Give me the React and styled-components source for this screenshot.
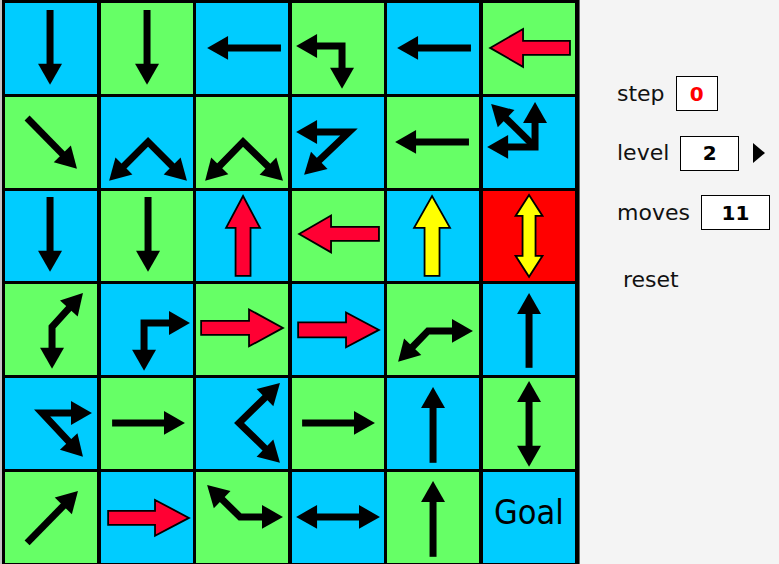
import React from 'react'
import styled, { createGlobalStyle } from 'styled-components'

const GlobalStyle = createGlobalStyle`
  html, body {
    margin: 0;
    padding: 0;
    background: #f4f4f4;
    overflow: hidden;
  }
`

const COLORS = {
  blue: '#00ccff',
  green: '#66ff66',
  red: '#ff0000',
}

const Page = styled.div`
  display: flex;
  align-items: flex-start;
  width: 779px;
  height: 564px;
  overflow: hidden;
`

const Board = styled.div`
  box-sizing: border-box;
  width: 580px;
  display: grid;
  grid-template-columns: repeat(6, 1fr);
  grid-auto-rows: 90.8px;
  gap: 3px 3.5px;
  padding: 3px 4px 3px 3px;
  background: #000;
  border-left: 2px solid #c4c4c4;
  border-right: 1px solid #666;
  flex-shrink: 0;
`

const Cell = styled.div`
  position: relative;
  background: ${(p) => COLORS[p.$bg]};
  display: flex;
  align-items: center;
  justify-content: center;
  svg {
    position: absolute;
    inset: 0;
    width: 100%;
    height: 100%;
  }
`

const Goal = styled.span`
  font-family: 'DejaVu Sans Condensed', 'DejaVu Sans', sans-serif;
  font-size: 34px;
  color: #000;
  padding-bottom: 10px;
`

const Side = styled.div`
  display: flex;
  flex-direction: column;
  gap: 24.5px;
  padding: 76px 0 0 37px;
  font-family: 'DejaVu Sans', sans-serif;
  font-size: 22px;
  color: #111;
`

const Row = styled.div`
  display: flex;
  align-items: center;
  gap: 11px;
  height: 35px;
`

const Label = styled.span`
  line-height: 1;
`

const ValueBox = styled.div`
  box-sizing: border-box;
  width: ${(p) => p.$w}px;
  height: 35px;
  border: 1px solid #000;
  background: #fff;
  display: flex;
  align-items: center;
  justify-content: center;
  font-weight: bold;
  font-size: 20px;
  color: ${(p) => (p.$red ? '#ff0000' : '#000')};
`

const NextLevel = styled.span`
  width: 0;
  height: 0;
  margin-left: 3px;
  border-left: 12px solid #000;
  border-top: 10px solid transparent;
  border-bottom: 10px solid transparent;
`

const ResetButton = styled.span`
  margin: 14px 0 0 6px;
  cursor: pointer;
`

// black line arrows: stroke shaft with filled triangular heads
const HEAD_LEN = 21
const HEAD_HALF = 12
const SHAFT = 7

const headAt = (tip, from) => {
  const dx = tip[0] - from[0]
  const dy = tip[1] - from[1]
  const d = Math.hypot(dx, dy)
  const ux = dx / d
  const uy = dy / d
  const bx = tip[0] - ux * HEAD_LEN
  const by = tip[1] - uy * HEAD_LEN
  const px = -uy * HEAD_HALF
  const py = ux * HEAD_HALF
  return {
    base: [bx + ux, by + uy],
    points: `${tip[0]},${tip[1]} ${bx + px},${by + py} ${bx - px},${by - py}`,
  }
}

const LineArrow = ({ pts, both }) => {
  const n = pts.length
  const end = headAt(pts[n - 1], pts[n - 2])
  const start = both ? headAt(pts[0], pts[1]) : null
  const shaft = pts.slice()
  shaft[n - 1] = end.base
  if (start) shaft[0] = start.base
  return (
    <g>
      <polyline
        points={shaft.map((p) => p.join(',')).join(' ')}
        fill="none"
        stroke="#000"
        strokeWidth={SHAFT}
        strokeLinejoin="miter"
        strokeLinecap="butt"
      />
      <polygon points={end.points} fill="#000" />
      {start && <polygon points={start.points} fill="#000" />}
    </g>
  )
}

// outlined block arrows (red / yellow)
const DIRS = { l: [-1, 0], r: [1, 0], u: [0, -1], d: [0, 1] }

const BlockArrow = ({ tip, dir, len, head, half, shaft, fill = '#ff0033', double }) => {
  const [ux, uy] = DIRS[dir]
  const vx = -uy
  const vy = ux
  const tail = [tip[0] - ux * len, tip[1] - uy * len]
  const shape = double
    ? [[0, 0], [head, -half], [head, -shaft], [len - head, -shaft], [len - head, -half], [len, 0],
       [len - head, half], [len - head, shaft], [head, shaft], [head, half]]
    : [[0, -shaft], [len - head, -shaft], [len - head, -half], [len, 0],
       [len - head, half], [len - head, shaft], [0, shaft]]
  const points = shape
    .map(([a, c]) => `${tail[0] + a * ux + c * vx},${tail[1] + a * uy + c * vy}`)
    .join(' ')
  return <polygon points={points} fill={fill} stroke="#000" strokeWidth={1.8} strokeLinejoin="miter" />
}

const L = (pts, both = false) => ({ kind: 'line', pts, both })
const B = (opts) => ({ kind: 'block', ...opts })
const YELLOW = '#ffff00'

const board = [
  // row 0
  { bg: 'blue', s: [L([[45, 7], [45, 82]])] },
  { bg: 'green', s: [L([[46, 7], [46, 82]])] },
  { bg: 'blue', s: [L([[85, 45], [11, 45]])] },
  { bg: 'green', s: [L([[4, 43], [50, 43], [50, 86]], true)] },
  { bg: 'blue', s: [L([[84, 45], [10, 45]])] },
  { bg: 'green', s: [B({ tip: [7, 45], dir: 'l', len: 80, head: 33, half: 19, shaft: 7 })] },
  // row 1
  { bg: 'green', s: [L([[22, 21], [72, 72]])] },
  { bg: 'blue', s: [L([[8, 84], [47, 45], [86, 84]], true)] },
  { bg: 'green', s: [L([[9, 84], [47, 45], [87, 84]], true)] },
  { bg: 'blue', s: [L([[4, 35], [57, 35], [12, 78]], true)] },
  { bg: 'green', s: [L([[82, 45], [8, 45]])] },
  { bg: 'blue', s: [L([[4, 50], [52, 50], [52, 5]], true), L([[50, 48], [8, 7]])] },
  // row 2
  { bg: 'blue', s: [L([[45, 6], [45, 81]])] },
  { bg: 'green', s: [L([[47, 6], [47, 81]])] },
  { bg: 'blue', s: [B({ tip: [47, 5], dir: 'u', len: 80, head: 32, half: 17, shaft: 7.5 })] },
  { bg: 'green', s: [B({ tip: [7, 43], dir: 'l', len: 80, head: 32, half: 18.5, shaft: 7 })] },
  { bg: 'blue', s: [B({ tip: [45, 5], dir: 'u', len: 80, head: 32, half: 18, shaft: 7.5, fill: YELLOW })] },
  { bg: 'red', s: [B({ tip: [46, 86], dir: 'd', len: 82, head: 21, half: 13.5, shaft: 6.5, fill: YELLOW, double: true })] },
  // row 3
  { bg: 'green', s: [L([[78, 9], [47, 43], [47, 85]], true)] },
  { bg: 'blue', s: [L([[89, 39], [43, 39], [43, 87]], true)] },
  { bg: 'green', s: [B({ tip: [87, 44], dir: 'r', len: 82, head: 34, half: 18.5, shaft: 7 })] },
  { bg: 'blue', s: [B({ tip: [87, 46], dir: 'r', len: 81, head: 33, half: 17.5, shaft: 7.5 })] },
  { bg: 'green', s: [L([[86, 47], [41, 47], [11, 78]], true)] },
  { bg: 'blue', s: [L([[46, 84], [46, 9]])] },
  // row 4
  { bg: 'blue', s: [L([[87, 35], [37, 35], [78, 79]], true)] },
  { bg: 'green', s: [L([[11, 45], [84, 45]])] },
  { bg: 'blue', s: [L([[84, 5], [43, 45], [84, 85]], true)] },
  { bg: 'green', s: [L([[10, 45], [83, 45]])] },
  { bg: 'blue', s: [L([[46, 85], [46, 9]])] },
  { bg: 'green', s: [L([[46, 3], [46, 89]], true)] },
  // row 5
  { bg: 'green', s: [L([[22, 71], [73, 19]])] },
  { bg: 'blue', s: [B({ tip: [88, 46], dir: 'r', len: 81, head: 34, half: 18, shaft: 7 })] },
  { bg: 'green', s: [L([[11, 13], [44, 45], [87, 45]], true)] },
  { bg: 'blue', s: [L([[4, 45], [88, 45]], true)] },
  { bg: 'green', s: [L([[46, 85], [46, 9]])] },
  { bg: 'blue', s: [], goal: true },
]

const Shape = ({ shape }) =>
  shape.kind === 'line' ? <LineArrow pts={shape.pts} both={shape.both} /> : <BlockArrow {...shape} />

const App = () => {
  return (
    <Page>
      <GlobalStyle />
      <Board>
        {board.map((cell, i) => (
          <Cell key={i} $bg={cell.bg}>
            {cell.s.length > 0 && (
              <svg viewBox="0 0 92 91">
                {cell.s.map((shape, j) => (
                  <Shape key={j} shape={shape} />
                ))}
              </svg>
            )}
            {cell.goal && <Goal>Goal</Goal>}
          </Cell>
        ))}
      </Board>
      <Side>
        <Row>
          <Label>step</Label>
          <ValueBox $w={42} $red>0</ValueBox>
        </Row>
        <Row>
          <Label>level</Label>
          <ValueBox $w={59}>2</ValueBox>
          <NextLevel />
        </Row>
        <Row>
          <Label>moves</Label>
          <ValueBox $w={69}>11</ValueBox>
        </Row>
        <Row>
          <ResetButton>reset</ResetButton>
        </Row>
      </Side>
    </Page>
  )
}

export default App
